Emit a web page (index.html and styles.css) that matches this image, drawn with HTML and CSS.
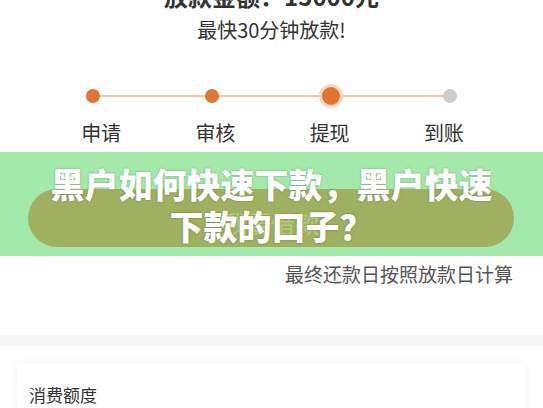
FILE: index.html
```html
<!DOCTYPE html>
<html lang="zh-CN">
<head>
    <meta charset="UTF-8">
    <meta name="viewport" content="width=device-width, initial-scale=1.0">
    <title>放款进度</title>
    <link rel="stylesheet" href="styles.css">
</head>
<body>
    <div class="page">
        <div class="summary">
            <h2 class="amount">放款金额：15000元</h2>
            <p class="speed">最快30分钟放款!</p>
        </div>

        <div class="steps">
            <div class="track">
                <span class="dot done"></span>
                <span class="dot done"></span>
                <span class="dot current"></span>
                <span class="dot"></span>
            </div>
            <div class="labels">
                <span>申请</span>
                <span>审核</span>
                <span>提现</span>
                <span>到账</span>
            </div>
        </div>

        <div class="action">
            <button class="borrow-btn">我要借款</button>
            <h1 class="banner-title">黑户如何快速下款，黑户快速<br>下款的口子？</h1>
        </div>

        <p class="note">最终还款日按照放款日计算</p>

        <div class="divider"></div>

        <div class="card">
            <p class="card-title">消费额度</p>
        </div>
    </div>
</body>
</html>
```

FILE: styles.css
```css
body {
    margin: 0;
    padding: 0;
    background-color: #fff;
    font-family: "Noto Sans CJK SC", "Noto Sans", sans-serif;
    color: #333;
}

.page {
    width: 543px;
    height: 408px;
    overflow: hidden;
}

.summary {
    margin-top: -20px;
    text-align: center;
}

.amount {
    margin: 0;
    font-size: 24px;
    line-height: 32px;
    font-weight: bold;
    color: #333;
}

.speed {
    margin: 5px 0 0;
    font-size: 20px;
    line-height: 26px;
    color: #333;
}

.steps {
    margin-top: 41px;
    padding: 0 34px 0 34px;
}

.track {
    position: relative;
    display: flex;
    justify-content: space-between;
    align-items: center;
    height: 24px;
    padding: 0 52px 0 52px;
}

.track::before {
    content: "";
    position: absolute;
    left: 59px;
    right: 59px;
    top: 11px;
    height: 2px;
    background-color: #f3c6a2;
}

.dot {
    position: relative;
    width: 14px;
    height: 14px;
    border-radius: 50%;
    background-color: #cccccc;
}

.dot.done {
    background-color: #e07430;
}

.dot.current {
    width: 18px;
    height: 18px;
    margin: 0 -2px;
    background-color: #e07430;
    box-shadow: 0 0 0 3px #f8d9c4;
}

.labels {
    display: grid;
    grid-template-columns: repeat(4, 1fr);
    margin-top: 11px;
    padding: 0 8px 0 10px;
}

.labels span {
    text-align: center;
    font-size: 20px;
    line-height: 28px;
    color: #333;
}

.action {
    position: relative;
    margin-top: 5px;
    height: 104px;
    padding: 37px 29px 0 28px;
    box-sizing: border-box;
    background-color: #a3e9a9;
}

.borrow-btn {
    display: block;
    width: 100%;
    height: 58px;
    border: none;
    border-radius: 29px;
    background-color: #9fb060;
    color: #b3ca7c;
    font-family: inherit;
    font-size: 24px;
    padding-top: 10px;
}

.banner-title {
    position: absolute;
    left: 0;
    right: 0;
    top: 11px;
    margin: 0;
    text-align: center;
    font-size: 34px;
    line-height: 42px;
    font-weight: 900;
    color: #fff;
    text-shadow: 0 0 2px rgba(0, 0, 0, 0.35);
}

.note {
    margin: 6px 30px 0 0;
    text-align: right;
    font-size: 19px;
    line-height: 24px;
    color: #555;
}

.divider {
    margin-top: 49px;
    height: 11px;
    background-color: #f4f6f8;
}

.card {
    margin: 17px 18px 0 17px;
    height: 80px;
    padding: 20px 12px 0;
    background-color: #fff;
    border-radius: 4px;
    box-shadow: 0 0 8px rgba(0, 0, 0, 0.06);
}

.card-title {
    margin: 0;
    font-size: 17px;
    line-height: 24px;
    color: #333;
}
```
